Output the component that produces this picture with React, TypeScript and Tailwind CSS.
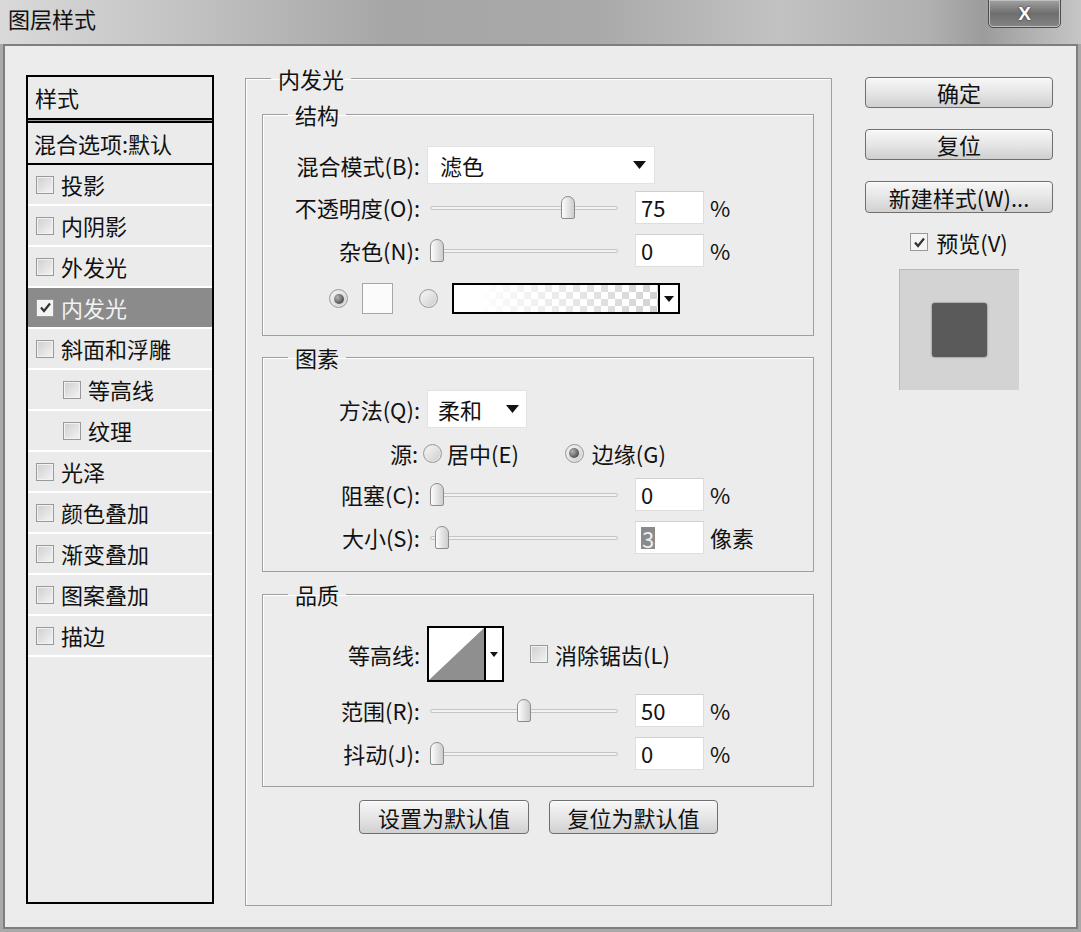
import React from "react";

const STYLES = [
  { label: "投影" },
  { label: "内阴影" },
  { label: "外发光" },
  { label: "内发光", active: true },
  { label: "斜面和浮雕" },
  { label: "等高线", indent: true },
  { label: "纹理", indent: true },
  { label: "光泽" },
  { label: "颜色叠加" },
  { label: "渐变叠加" },
  { label: "图案叠加" },
  { label: "描边" },
];

function CheckMark({ color = "#333" }: { color?: string }) {
  return (
    <svg width="13" height="13" viewBox="0 0 13 13">
      <path d="M2 6.5 L5 10 L11 2.5" fill="none" stroke={color} strokeWidth="2.2" />
    </svg>
  );
}

function Box({ checked }: { checked?: boolean }) {
  return (
    <span
      className={`w-[18px] h-[18px] shrink-0 border border-[#999] flex items-center justify-center ${
        checked ? "bg-[#f4f4f4]" : "bg-linear-to-br from-[#cfcfcf] to-[#f4f4f4] shadow-[inset_0_0_0_1px_#f2f2f2]"
      }`}
    >
      {checked && <CheckMark />}
    </span>
  );
}

function Radio({ on }: { on?: boolean }) {
  return (
    <span className="w-[19px] h-[19px] shrink-0 rounded-full border border-[#9a9a9a] bg-linear-to-br from-[#fafafa] to-[#cbcbcb] shadow-[inset_0_0_0_1px_#e6e6e6] flex items-center justify-center">
      {on && <span className="w-[10px] h-[10px] rounded-full bg-radial-[at_35%_35%] from-[#b5b5b5] to-[#2b2b2b]" />}
    </span>
  );
}

function Caret({ w = 12, h = 7 }: { w?: number; h?: number }) {
  return (
    <svg width={w} height={h} viewBox={`0 0 ${w} ${h}`}>
      <polygon points={`0,0 ${w},0 ${w / 2},${h}`} fill="#111" />
    </svg>
  );
}

function Slider({ value }: { value: number }) {
  return (
    <div className="relative ml-[10px] w-[188px] h-full flex items-center">
      <div className="w-full h-[4px] rounded-full border border-[#c4c4c4] bg-[#f2f2f2]" />
      <div
        className="absolute top-[5px] w-[14px] h-[23px] rounded-t-[7px] rounded-b-[2px] border border-[#8c8c8c] bg-linear-to-r from-[#fdfdfd] to-[#cdcdcd]"
        style={{ left: `${value * 1.74}px` }}
      />
    </div>
  );
}

function NumInput({ value, selected }: { value: string; selected?: boolean }) {
  return (
    <div className="ml-[17px] w-[69px] h-full bg-white border border-[#dedede] border-t-[#cfcfcf] flex items-center pl-[5px]">
      {selected ? <span className="bg-[#8a8a8a] text-[#eee] leading-[22px] px-[1px]">{value}</span> : <span>{value}</span>}
    </div>
  );
}

function SliderRow({ label, value, unit = "%", selected, className }: { label: string; value: number; unit?: string; selected?: boolean; className: string }) {
  return (
    <div className={`flex items-center h-[33px] ${className}`}>
      <span className="w-[157px] text-right">{label}</span>
      <Slider value={value} />
      <NumInput value={String(value)} selected={selected} />
      <span className="ml-[6px]">{unit}</span>
    </div>
  );
}

function Group({ title, className, children }: { title: string; className: string; children: React.ReactNode }) {
  return (
    <fieldset className={`border border-[#9f9f9f] shadow-[inset_1px_1px_0_#fff] ${className}`}>
      <legend className="ml-[25px] px-[7px] leading-[26px]">{title}</legend>
      {children}
    </fieldset>
  );
}

function Button({ children, className }: { children: React.ReactNode; className: string }) {
  return (
    <div
      className={`rounded-[4px] border border-[#6f6f6f] bg-linear-to-b from-[#f7f7f7] via-[#e6e6e6] to-[#d0d0d0] shadow-[inset_0_1px_0_#fff] flex items-center justify-center ${className}`}
    >
      {children}
    </div>
  );
}

export default function App() {
  return (
    <div className="w-[1081px] h-[932px] overflow-hidden flex flex-col bg-[#a9a9a9] text-[22px] text-[#111] font-['Noto_Sans_CJK_SC','Noto_Sans',sans-serif]">
      {/* title bar */}
      <div className="h-[44px] shrink-0 flex items-start bg-[linear-gradient(90deg,#d9d9d9_0%,#c4c4c4_16%,#a6a6a6_36%,#a9a9a9_55%,#c2c2c2_72%,#b0b0b0_86%,#9c9c9c_91%,#c6c6c6_100%)]">
        <span className="pl-[8px] pt-[4px] leading-[28px]">图层样式</span>
        <div className="ml-auto mr-[20px] -mt-[1px] w-[73px] h-[29px] rounded-b-[5px] border border-[#4d4d4d] bg-linear-to-b from-[#a2a2a2] via-[#6f6f6f] to-[#858585] shadow-[inset_0_0_0_1px_#c0c0c0] flex items-center justify-center">
          <span className="text-white font-bold text-[19px] leading-none font-['Liberation_Sans',sans-serif] [text-shadow:0_0_2px_#222]">X</span>
        </div>
      </div>

      {/* dialog body */}
      <div className="h-[885px] shrink-0 mx-[3px] border-2 border-[#7e7e7e] bg-[#ececec] flex items-start pl-[21px] pt-[19px]">
        {/* style list */}
        <div className="mt-[10px] w-[188px] h-[829px] border-2 border-black bg-[#ebebeb] flex flex-col">
          <div className="h-[41px] flex items-center pl-[7px]">样式</div>
          <div className="h-[5px] border-y-2 border-black bg-[#9a9a9a]" />
          <div className="h-[40px] flex items-center pl-[6px]">混合选项:默认</div>
          <div className="h-[2px] bg-black" />
          {STYLES.map((s) => (
            <div
              key={s.label}
              className={`h-[41px] shrink-0 border-b-2 border-white flex items-center gap-[7px] ${s.indent ? "pl-[35px]" : "pl-[8px]"} ${
                s.active ? "bg-[#8b8b8b] text-[#f2f2f2]" : ""
              }`}
            >
              <Box checked={s.active} />
              <span>{s.label}</span>
            </div>
          ))}
        </div>

        {/* settings */}
        <fieldset className="ml-[31px] w-[587px] h-[841px] border border-[#9f9f9f] shadow-[inset_1px_1px_0_#fff]">
          <legend className="ml-[25px] px-[7px] leading-[26px]">内发光</legend>

          <Group title="结构" className="mt-[10px] ml-[16px] w-[552px] h-[235px]">
            <div className="mt-[19px] h-[38px] flex items-center">
              <span className="w-[157px] text-right">混合模式(B):</span>
              <div className="ml-[7px] w-[228px] h-full bg-white border border-[#e2e2e2] flex items-center pl-[12px] pr-[8px]">
                <span className="flex-1">滤色</span>
                <Caret w={13} h={8} />
              </div>
            </div>
            <SliderRow label="不透明度(O):" value={75} className="mt-[7px]" />
            <SliderRow label="杂色(N):" value={0} className="mt-[10px]" />
            <div className="mt-[16px] h-[31px] flex items-center pl-[66px]">
              <Radio on />
              <div className="ml-[14px] w-[31px] h-[31px] bg-[#fbfbfb] border border-[#a6a6a6]" />
              <span className="ml-[26px]">
                <Radio />
              </span>
              <div className="ml-[14px] w-[228px] h-[31px] border-2 border-black flex">
                <div className="flex-1 bg-[image:repeating-conic-gradient(#d3d3d3_0%_25%,#ffffff_0%_50%)] bg-[length:14px_14px]">
                  <div className="w-full h-full bg-linear-to-r from-white from-10% to-white/0" />
                </div>
                <div className="w-[20px] border-l-2 border-black bg-white flex items-center justify-center">
                  <Caret w={10} h={6} />
                </div>
              </div>
            </div>
          </Group>

          <Group title="图素" className="mt-[8px] ml-[16px] w-[552px] h-[228px]">
            <div className="mt-[20px] h-[38px] flex items-center">
              <span className="w-[157px] text-right">方法(Q):</span>
              <div className="ml-[7px] w-[100px] h-full bg-white border border-[#e2e2e2] flex items-center pl-[10px] pr-[7px]">
                <span className="flex-1">柔和</span>
                <Caret w={13} h={8} />
              </div>
            </div>
            <div className="mt-[13px] h-[24px] flex items-center">
              <span className="w-[155px] text-right">源:</span>
              <span className="ml-[5px]">
                <Radio />
              </span>
              <span className="ml-[5px]">居中(E)</span>
              <span className="ml-[46px]">
                <Radio on />
              </span>
              <span className="ml-[8px]">边缘(G)</span>
            </div>
            <SliderRow label="阻塞(C):" value={0} className="mt-[13px]" />
            <SliderRow label="大小(S):" value={3} unit="像素" selected className="mt-[10px]" />
          </Group>

          <Group title="品质" className="mt-[9px] ml-[16px] w-[552px] h-[206px]">
            <div className="mt-[19px] h-[56px] flex items-center">
              <span className="w-[157px] text-right">等高线:</span>
              <div className="ml-[7px] w-[77px] h-[56px] border-2 border-black bg-white flex">
                <svg className="w-[55px] h-full" viewBox="0 0 55 52" preserveAspectRatio="none">
                  <polygon points="0,52 55,0 55,52" fill="#8f8f8f" />
                </svg>
                <div className="flex-1 border-l-2 border-black flex items-center justify-center">
                  <Caret w={8} h={5} />
                </div>
              </div>
              <span className="ml-[26px]">
                <Box />
              </span>
              <span className="ml-[7px]">消除锯齿(L)</span>
            </div>
            <SliderRow label="范围(R):" value={50} className="mt-[12px]" />
            <SliderRow label="抖动(J):" value={0} className="mt-[10px]" />
          </Group>

          <div className="mt-[13px] flex justify-center gap-[20px]">
            <Button className="w-[170px] h-[34px]">设置为默认值</Button>
            <Button className="w-[169px] h-[34px]">复位为默认值</Button>
          </div>
        </fieldset>

        {/* right column */}
        <div className="ml-[33px] mt-[12px] w-[188px] flex flex-col items-center">
          <Button className="w-full h-[31px]">确定</Button>
          <Button className="mt-[21px] w-full h-[31px]">复位</Button>
          <Button className="mt-[21px] w-full h-[32px]">新建样式(W)...</Button>
          <div className="mt-[19px] h-[20px] flex items-center gap-[8px]">
            <Box checked />
            <span>预览(V)</span>
          </div>
          <div className="mt-[17px] w-[120px] h-[121px] bg-[#d3d3d3] border-t border-l border-[#b8b8b8] flex items-center justify-center">
            <div className="w-[55px] h-[54px] rounded-[3px] bg-[#5a5a5a] shadow-[0_0_2px_#5a5a5a]" />
          </div>
        </div>
      </div>
    </div>
  );
}
